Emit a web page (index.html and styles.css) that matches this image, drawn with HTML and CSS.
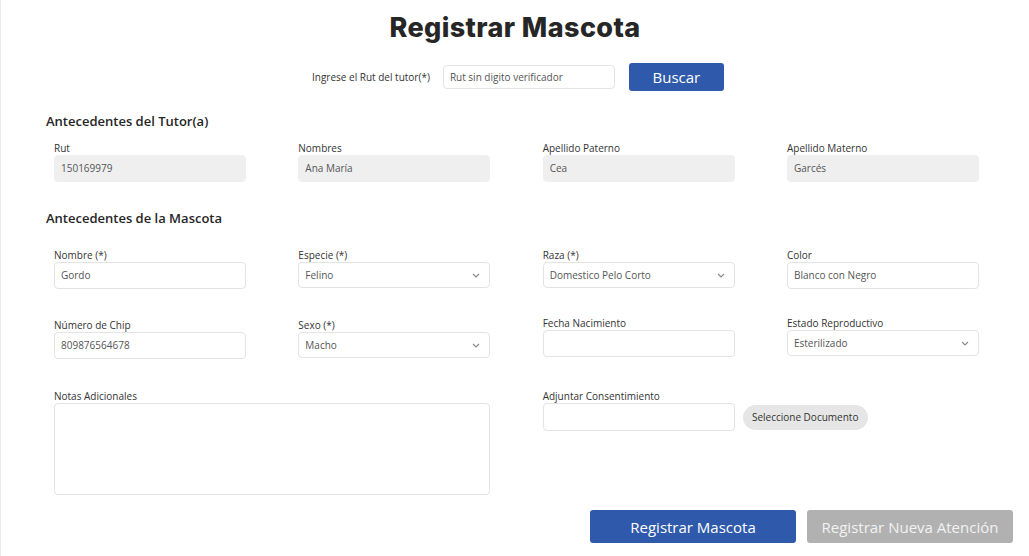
FILE: index.html
```html
<!DOCTYPE html>
<html lang="es">
<head>
<meta charset="utf-8">
<title>Registrar Mascota</title>
<link rel="stylesheet" href="styles.css">
</head>
<body>
<div class="page">
  <h1 class="title">Registrar Mascota</h1>

  <div class="search">
    <label class="search-label">Ingrese el Rut del tutor(*)</label>
    <input class="search-input" type="text" placeholder="Rut sin digito verificador">
    <button class="btn btn-primary btn-search">Buscar</button>
  </div>

  <h2 class="section">Antecedentes del Tutor(a)</h2>
  <div class="grid tutor">
    <div class="field"><div class="lbl">Rut</div><div class="ctrl ro">150169979</div></div>
    <div class="field"><div class="lbl">Nombres</div><div class="ctrl ro">Ana María</div></div>
    <div class="field"><div class="lbl">Apellido Paterno</div><div class="ctrl ro">Cea</div></div>
    <div class="field"><div class="lbl">Apellido Materno</div><div class="ctrl ro">Garcés</div></div>
  </div>

  <h2 class="section section-pet">Antecedentes de la Mascota</h2>
  <div class="grid pet">
    <div class="field"><div class="lbl">Nombre (*)</div><div class="ctrl">Gordo</div></div>
    <div class="field"><div class="lbl">Especie (*)</div><div class="ctrl sel"><span>Felino</span><svg class="chev" width="8" height="5" viewBox="0 0 8 5"><path d="M1 1l3 3 3-3" fill="none" stroke="#888" stroke-width="1.1"/></svg></div></div>
    <div class="field"><div class="lbl">Raza (*)</div><div class="ctrl sel"><span>Domestico Pelo Corto</span><svg class="chev" width="8" height="5" viewBox="0 0 8 5"><path d="M1 1l3 3 3-3" fill="none" stroke="#888" stroke-width="1.1"/></svg></div></div>
    <div class="field"><div class="lbl">Color</div><div class="ctrl">Blanco con Negro</div></div>

    <div class="field"><div class="lbl">Número de Chip</div><div class="ctrl">809876564678</div></div>
    <div class="field"><div class="lbl">Sexo (*)</div><div class="ctrl sel"><span>Macho</span><svg class="chev" width="8" height="5" viewBox="0 0 8 5"><path d="M1 1l3 3 3-3" fill="none" stroke="#888" stroke-width="1.1"/></svg></div></div>
    <div class="field up"><div class="lbl">Fecha Nacimiento</div><div class="ctrl"></div></div>
    <div class="field up"><div class="lbl">Estado Reproductivo</div><div class="ctrl sel"><span>Esterilizado</span><svg class="chev" width="8" height="5" viewBox="0 0 8 5"><path d="M1 1l3 3 3-3" fill="none" stroke="#888" stroke-width="1.1"/></svg></div></div>

    <div class="field span2 low"><div class="lbl">Notas Adicionales</div><div class="ctrl area"></div></div>
    <div class="field low"><div class="lbl">Adjuntar Consentimiento</div>
      <div class="file-row"><div class="ctrl file"></div><button class="doc-btn">Seleccione Documento</button></div>
    </div>
  </div>

  <div class="actions">
    <button class="btn btn-primary btn-big">Registrar Mascota</button>
    <button class="btn btn-disabled btn-big">Registrar Nueva Atención</button>
  </div>
</div>
</body>
</html>
```
FILE: styles.css
```css
* { box-sizing: border-box; }
html, body { margin: 0; padding: 0; background: #fff; }
body {
  font-family: "Open Sans", "Liberation Sans", sans-serif;
  color: #333;
}
.page {
  width: 1029px;
  height: 556px;
  border-left: 1px solid #ececec;
  padding: 10px 0 0 45px;
  overflow: hidden;
}
.title {
  margin: 0 0 17px 0;
  margin-left: -45px;
  text-align: center;
  font-family: "Inter", "Liberation Sans", sans-serif;
  font-weight: 800;
  font-size: 27px;
  line-height: 36px;
  color: #262626;
  letter-spacing: 0.4px;
}
.search {
  display: flex;
  align-items: center;
  margin-left: 266px;
  height: 28px;
}
.search-label {
  font-size: 10px;
  color: #333;
  margin-right: 13px;
}
.search-input {
  width: 172px;
  height: 24px;
  border: 1px solid #e4e4e4;
  border-radius: 4px;
  padding: 0 6px;
  font-family: "Open Sans", sans-serif;
  font-size: 10px;
  color: #555;
  margin-right: 14px;
  outline: none;
}
.search-input::placeholder { color: #555; }
.btn {
  border: none;
  font-family: "Open Sans", sans-serif;
  cursor: pointer;
  border-radius: 3px;
}
.btn-primary { background: #2f5aab; color: #fff; }
.btn-disabled { background: #b1b1b1; color: #f2f2f2; }
.btn-search {
  width: 95px;
  height: 28px;
  font-size: 15px;
  padding: 0;
}
.section {
  margin: 21px 0 0 0;
  font-size: 13px;
  font-weight: 600;
  line-height: 18px;
  color: #262626;
}
.section-pet { margin-top: 27px; }
.grid {
  display: grid;
  grid-template-columns: repeat(4, 192px);
  column-gap: 52.33px;
  margin-left: 8px;
}
.tutor { margin-top: 11px; }
.pet { margin-top: 21px; row-gap: 29px; }
.lbl {
  font-size: 10px;
  line-height: 14px;
  color: #333;
}
.ctrl {
  height: 27px;
  border: 1px solid #e3e3e3;
  border-radius: 4px;
  padding: 0 6px;
  font-size: 10px;
  line-height: 25px;
  color: #555;
  background: #fff;
}
.ctrl.ro { background: #efefef; border-color: #efefef; }
.sel {
  height: 26px;
  line-height: 24px;
  display: flex;
  justify-content: space-between;
  align-items: center;
  padding-right: 9px;
}
.chev { flex: none; }
.up { margin-top: -2px; }
.low { margin-top: 1px; }
.span2 { grid-column: span 2; }
.area { height: 92px; }
.file-row { display: flex; align-items: center; }
.file { width: 192px; height: 28px; flex: none; }
.doc-btn {
  margin-left: 8px;
  flex: none;
  width: 125px;
  height: 25px;
  border: none;
  border-radius: 13px;
  background: #e6e6e6;
  color: #333;
  font-family: "Open Sans", sans-serif;
  font-size: 10px;
  padding: 0;
  white-space: nowrap;
}
.actions {
  display: flex;
  justify-content: flex-end;
  gap: 11px;
  margin-top: 15px;
  padding-right: 16px;
}
.btn-big {
  width: 206px;
  height: 33px;
  font-size: 15px;
  padding: 0;
}
```
